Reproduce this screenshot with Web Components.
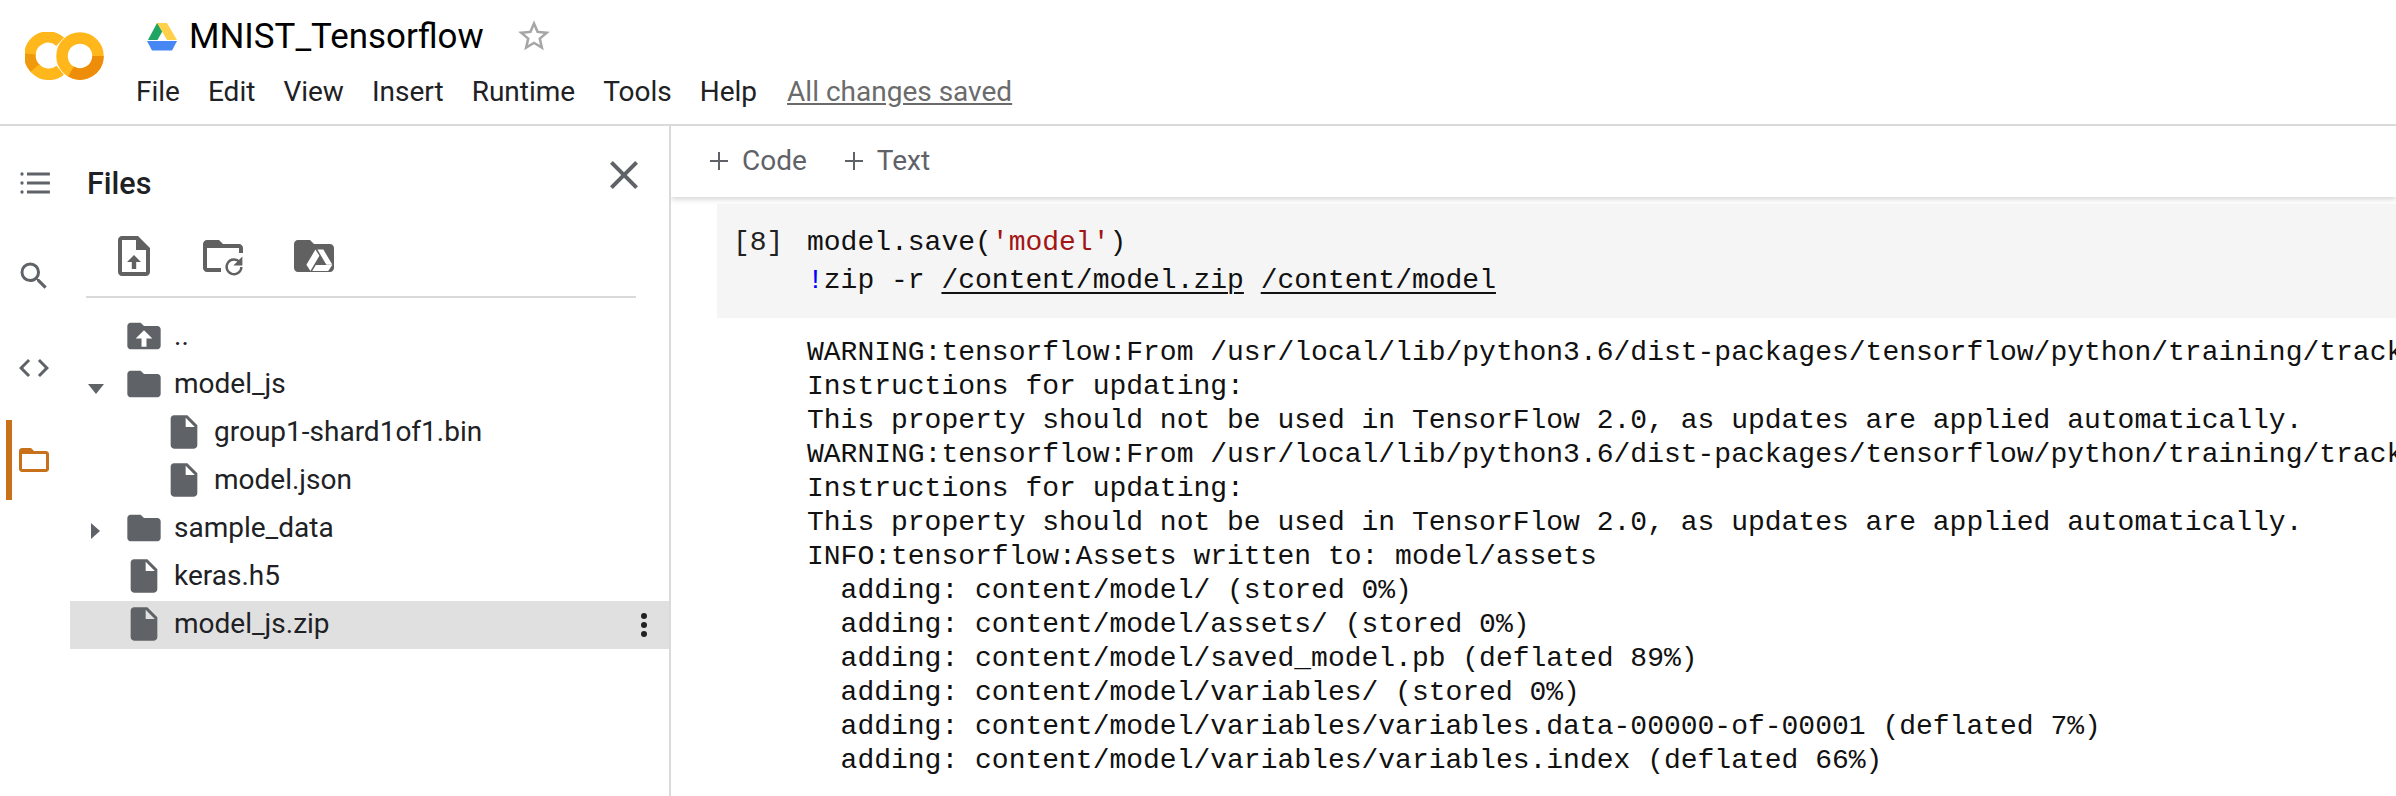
<!doctype html>
<html><head><meta charset="utf-8"><style>
html,body{margin:0;background:#fff}
body{width:2396px;height:796px;overflow:hidden;font-family:Roboto,sans-serif}
</style></head><body>
<app-shell>
  <colab-header slot="header" title-text="MNIST_Tensorflow"></colab-header>
  <colab-rail slot="rail"></colab-rail>
  <file-panel slot="panel">
    <file-row kind="up" level="0">..</file-row>
    <file-row kind="folder" caret="down" level="0">model_js</file-row>
    <file-row kind="file" level="1">group1-shard1of1.bin</file-row>
    <file-row kind="file" level="1">model.json</file-row>
    <file-row kind="folder" caret="right" level="0">sample_data</file-row>
    <file-row kind="file" level="0">keras.h5</file-row>
    <file-row kind="file" level="0" selected>model_js.zip</file-row>
  </file-panel>
  <note-book slot="main"></note-book>
</app-shell>
<script>
const ICONS={
 star:'<path d="M22 9.24l-7.19-.62L12 2 9.19 8.63 2 9.24l5.46 4.73L5.82 21 12 17.27 18.18 21l-1.63-7.03L22 9.24zM12 15.4l-3.76 2.27 1-4.28-3.32-2.88 4.38-.38L12 6.1l1.71 4.04 4.38.38-3.32 2.88 1 4.28L12 15.4z"/>',
 toc:'<path d="M7.3 5h15.3v2H7.3zM7.3 11h15.3v2H7.3zM7.3 17h15.3v2H7.3z"/><circle cx="4" cy="6" r="1.1"/><circle cx="4" cy="12" r="1.1"/><circle cx="4" cy="18" r="1.1"/>',
 search:'<path d="M15.5 14h-.79l-.28-.27A6.47 6.47 0 0 0 16 9.5 6.5 6.5 0 1 0 9.5 16c1.61 0 3.09-.59 4.23-1.57l.27.28v.79l5 4.99L20.49 19l-4.99-5zm-6 0C7.01 14 5 11.99 5 9.5S7.01 5 9.5 5 14 7.01 14 9.5 11.99 14 9.5 14z"/>',
 code:'<path d="M9.4 16.6L4.8 12l4.6-4.6L8 6l-6 6 6 6 1.4-1.4zm5.2 0l4.6-4.6-4.6-4.6L16 6l6 6-6 6-1.4-1.4z"/>',
 folderline:'<path d="M20 6h-8l-2-2H4c-1.1 0-2 .9-2 2v12c0 1.1.9 2 2 2h16c1.1 0 2-.9 2-2V8c0-1.1-.9-2-2-2zm0 12H4V8h16v10z"/>',
 close:'<path d="M19 6.41L17.59 5 12 10.59 6.41 5 5 6.41 10.59 12 5 17.59 6.41 19 12 13.41 17.59 19 19 17.59 13.41 12z"/>',
 upload:'<path fill-rule="evenodd" d="M14 2H6c-1.1 0-2 .9-2 2v16c0 1.1.9 2 2 2h12c1.1 0 2-.9 2-2V8l-6-6zM18 20H6V4h7v5h5z"/><path d="M8.5 15l3.5-3.5 3.5 3.5h-2.4v3.5h-2.200V15z"/>',
 refresh:'<path d="M11 20H4c-1.1 0-2-.9-2-2V6c0-1.1.9-2 2-2h6l2 2h8c1.1 0 2 .9 2 2v2.5h-2V8H4v10h7z"/><path d="M20.3 15A3.7 3.7 0 1 0 21.2 17.5" fill="none" stroke="currentColor" stroke-width="1.2"/><path d="M21.7 12.3v4.5h-4.5z"/>',
 drive:'<path d="M10 4H4c-1.1 0-2 .9-2 2v12c0 1.1.9 2 2 2h16c1.1 0 2-.9 2-2V8c0-1.1-.9-2-2-2h-8l-2-2z"/><path fill="#fff" d="M12.7 8.8L8.2 16.4l2 3.1 4.5-7.6zM13.7 8.8h3l4.5 7.6h-3zM12.9 16.5h8.2l-2 3h-8z"/>',
 folder:'<path d="M10 4H4c-1.1 0-2 .9-2 2v12c0 1.1.9 2 2 2h16c1.1 0 2-.9 2-2V8c0-1.1-.9-2-2-2h-8l-2-2z"/>',
 up:'<path fill-rule="evenodd" d="M10 4H4c-1.1 0-2 .9-2 2v12c0 1.1.9 2 2 2h16c1.1 0 2-.9 2-2V8c0-1.1-.9-2-2-2h-8l-2-2zM10.5 18.5v-5H7l5-5 5 5h-3.5v5z"/>',
 file:'<path d="M6 2c-1.1 0-2 .9-2 2v16c0 1.1.9 2 2 2h12c1.1 0 2-.9 2-2V8l-6-6H6zm7 7V3.5L18.5 9H13z"/>'
};
function svg(n,w,h){return `<svg width="${w}" height="${h}" viewBox="0 0 24 24" fill="currentColor" style="display:block">${ICONS[n]}</svg>`}
class Base extends HTMLElement{constructor(){super();this.attachShadow({mode:'open'})}}

class AppShell extends Base{connectedCallback(){this.shadowRoot.innerHTML=`<style>
:host{display:grid;grid-template-columns:70px 601px 1fr;grid-template-rows:124px 672px;width:2396px;height:796px;overflow:hidden}
::slotted([slot=header]){grid-column:1/-1}
</style><slot name="header"></slot><slot name="rail"></slot><slot name="panel"></slot><slot name="main"></slot>`}}

class ColabHeader extends Base{connectedCallback(){this.shadowRoot.innerHTML=`<style>
:host{display:flex;height:124px;color:#000;position:relative;z-index:2}
.logo{width:136px;flex:none;padding:32px 0 0 25px;box-sizing:border-box}
.right{display:flex;flex-direction:column;padding-top:17px}
.t{display:flex;align-items:center;height:40px}
.drive{margin:0 12px 0 11px;flex:none}
h1{margin:0;font:400 34.9px/40px Roboto,sans-serif;color:#000}
.star{margin-left:31px;color:#a6a6a6;margin-top:-2px}
nav{display:flex;height:36px;margin-top:17px;font:400 28px/36px Roboto,sans-serif;color:#202124}
nav span{margin-right:28px}
nav .saved{color:#6b6b6b;text-decoration:underline;margin-left:2px;margin-right:0}
</style>
<div class="logo"><svg width="80" height="48" viewBox="0 0 80 48" style="display:block">
<path d="M35.2 9.8A18 18 0 0 0 5 24" fill="none" stroke="#ffb71c" stroke-width="11.5"/>
<path d="M5 22A18 18 0 0 0 11 37" fill="none" stroke="#ef9a0c" stroke-width="11.5"/>
<path d="M10 36A18 18 0 0 0 35.2 38.2" fill="none" stroke="#ffb71c" stroke-width="11.5"/>
<circle cx="55" cy="24" r="18" fill="none" stroke="#ffb71c" stroke-width="11.5"/>
<path d="M73 24A18 18 0 0 1 46 39.6" fill="none" stroke="#ee8d0a" stroke-width="11.5"/>
</svg></div>
<div class="right"><div class="t">
<svg class="drive" width="30" height="28" viewBox="0 0 30 28" style="display:block">
<path d="M10 0h10l-9.5 17H1z" fill="#1fa463"/>
<path d="M10 0h10l10 17H20z" fill="#ffd04b"/>
<path d="M0 18h30l-5 9.5H5z" fill="#4687f4"/>
</svg>
<h1>${this.getAttribute('title-text')}</h1>
<span class="star">${svg('star',38,38)}</span></div>
<nav><span>File</span><span>Edit</span><span>View</span><span>Insert</span><span>Runtime</span><span>Tools</span><span>Help</span><span class="saved">All changes saved</span></nav></div>`}}

class ColabRail extends Base{connectedCallback(){this.shadowRoot.innerHTML=`<style>
:host{display:flex;flex-direction:column;border-top:2px solid #dadada;box-sizing:border-box;color:#5f6368;padding-top:10px}
.b{height:92px;display:flex;align-items:center;justify-content:center;box-sizing:border-box;width:68px}
.on{color:#c8701a;height:80px;margin-top:6px;border-left:6px solid #c8701a;margin-left:6px;width:62px;padding-right:12px}
</style>
<div class="b" style="height:94px">${svg('toc',36,36)}</div>
<div class="b">${svg('search',36,36)}</div>
<div class="b">${svg('code',36,36)}</div>
<div class="b on">${svg('folderline',36,36)}</div>`}}

class FilePanel extends Base{connectedCallback(){this.shadowRoot.innerHTML=`<style>
:host{display:block;border-top:2px solid #dadada;box-sizing:border-box;border-right:2px solid #dadada;color:#5f6368}
.top{display:flex;justify-content:space-between;align-items:center;height:56px;padding:30px 0 0 17px;}
h2{margin:0;font:500 30.5px/40px Roboto,sans-serif;color:#202124}
.x{color:#5f6368;margin-top:-19px;margin-right:21px}
.tools{display:flex;align-items:flex-start;margin:20px 0 0 16px;width:550px;height:66px;padding:0 0 0 24px;box-sizing:border-box;border-bottom:2px solid #dadada;gap:41px;color:#616161}
.list{padding-top:15px;width:599px}
</style>
<div class="top"><h2>Files</h2><span class="x">${svg('close',48,48)}</span></div>
<div class="tools"><span>${svg('upload',48,48)}</span><span>${svg('refresh',48,48)}</span><span style="margin-left:2px">${svg('drive',48,48)}</span></div>
<div class="list"><slot></slot></div>`}}

class FileRow extends Base{connectedCallback(){
 const kind=this.getAttribute('kind'),lvl=+this.getAttribute('level'),caret=this.getAttribute('caret');
 const sel=this.hasAttribute('selected');
 const ic=svg(kind,40,40);
 const c=caret==='down'?'<svg width="20" height="12" viewBox="0 0 20 12" style="display:block;margin-top:8px"><path d="M2 1h16l-8 10z" fill="#5f6368"/></svg>':caret==='right'?'<svg width="12" height="20" viewBox="0 0 12 20" style="display:block;margin-top:4px;margin-left:4px"><path d="M1 2v16l9-8z" fill="#5f6368"/></svg>':'';
 this.shadowRoot.innerHTML=`<style>
:host{display:flex;align-items:center;height:48px;color:#5f6368;${sel?'background:#e0e0e0;':''}}
.caret{width:37px;margin-left:16px;flex:none}
.icon{width:42px;flex:none;display:flex;justify-content:center;margin-left:${lvl*40}px;padding-bottom:2px}
.n{font:400 28px/48px Roboto,sans-serif;color:#202124;margin-left:9px;flex:1;padding-bottom:3px}
.more{margin-right:7px}
</style><span class="caret">${c}</span><span class="icon">${ic}</span><span class="n"><slot></slot></span>${sel?`<svg class="more" width="36" height="36" viewBox="0 0 24 24" fill="#202124" style="display:block"><circle cx="12" cy="6" r="2"/><circle cx="12" cy="12" r="2"/><circle cx="12" cy="18" r="2"/></svg>`:''}`}}

class NoteBook extends Base{connectedCallback(){this.shadowRoot.innerHTML=`<style>
:host{display:block;border-top:2px solid #dadada;box-sizing:border-box;overflow:hidden;min-width:0}
.bar{display:flex;align-items:center;height:70px;padding:0 0 1px 37px;box-shadow:0 2px 6px rgba(0,0,0,.18);position:relative;font:400 28px/36px Roboto,sans-serif;gap:36px}
.bar span{display:flex;align-items:center;gap:12px;color:#5f6368}
.bar svg{display:block}
</style>
<div class="bar">
<span><svg width="22" height="22" viewBox="0 0 22 22"><path d="M10 2h2v8h8v2h-8v8h-2v-8H2v-2h8z" fill="#5f6368"/></svg>Code</span>
<span><svg width="22" height="22" viewBox="0 0 22 22"><path d="M10 2h2v8h8v2h-8v8h-2v-8H2v-2h8z" fill="#5f6368"/></svg>Text</span></div>
<code-cell></code-cell>`}}

class CodeCell extends Base{connectedCallback(){this.shadowRoot.innerHTML=`<style>
:host{display:block;font:400 28px/34px "Liberation Mono",monospace;color:#111;white-space:pre}
.in{display:flex;margin:7px 0 0 46px;background:#f5f5f5;height:114px;padding-top:20px;box-sizing:border-box;line-height:38px}
.no{width:90px;text-align:left;padding-left:16px;box-sizing:border-box;flex:none;color:#212121}
.s{color:#a31515}.b{color:#0000ff}
u{text-decoration:underline;text-decoration-thickness:2px;text-underline-offset:4px}
.out{margin:18px 0 0 136px;line-height:34px;display:block}
</style><div class="in"><div class="no">[8]</div><div class="c">model.save(<span class="s">'model'</span>)
<span class="b">!</span>zip -r <u>/content/model.zip</u> <u>/content/model</u></div></div><div class="out">WARNING:tensorflow:From /usr/local/lib/python3.6/dist-packages/tensorflow/python/training/tracking/tracking.py
Instructions for updating:
This property should not be used in TensorFlow 2.0, as updates are applied automatically.
WARNING:tensorflow:From /usr/local/lib/python3.6/dist-packages/tensorflow/python/training/tracking/tracking.py
Instructions for updating:
This property should not be used in TensorFlow 2.0, as updates are applied automatically.
INFO:tensorflow:Assets written to: model/assets
  adding: content/model/ (stored 0%)
  adding: content/model/assets/ (stored 0%)
  adding: content/model/saved_model.pb (deflated 89%)
  adding: content/model/variables/ (stored 0%)
  adding: content/model/variables/variables.data-00000-of-00001 (deflated 7%)
  adding: content/model/variables/variables.index (deflated 66%)</div>`}}
customElements.define('app-shell',AppShell);
customElements.define('colab-header',ColabHeader);
customElements.define('colab-rail',ColabRail);
customElements.define('file-panel',FilePanel);
customElements.define('file-row',FileRow);
customElements.define('note-book',NoteBook);
customElements.define('code-cell',CodeCell);
</script></body></html>
